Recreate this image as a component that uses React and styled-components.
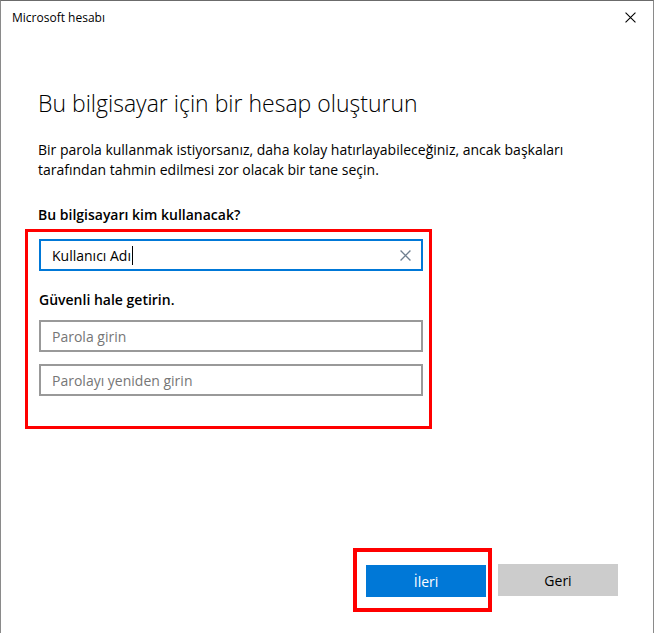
import React from "react";
import styled, { createGlobalStyle } from "styled-components";

const GlobalStyle = createGlobalStyle`
    html, body {
        margin: 0;
        padding: 0;
        background: #ffffff;
    }
    * {
        box-sizing: border-box;
    }
`;

const StyledWindow = styled.div`
    width: 654px;
    height: 633px;
    display: flex;
    flex-direction: column;
    background: #ffffff;
    border-top: 1px solid #6b6b6b;
    border-left: 1px solid #8a8a8a;
    border-right: 1px solid #8a8a8a;
    font-family: "Segoe UI", "Open Sans", "Noto Sans", sans-serif;
    color: #000000;
`;

const StyledTitleBar = styled.div`
    height: 32px;
    display: flex;
    align-items: center;
    justify-content: space-between;
    padding: 0 17px 0 11px;
    font-size: 12px;
`;

const StyledCloseButton = styled.button`
    width: 12px;
    height: 12px;
    padding: 0;
    border: none;
    background: none;
    display: flex;
    align-items: center;
    justify-content: center;
`;

const StyledContent = styled.div`
    flex: 1 1 auto;
    display: flex;
    flex-direction: column;
    padding: 0 0 0 37px;
`;

const StyledHeading = styled.h1`
    margin: 55px 0 0 0;
    font-size: 23px;
    font-weight: 300;
    line-height: 30px;
    color: #000000;
`;

const StyledParagraph = styled.p`
    margin: 22px 0 0 0;
    width: 560px;
    font-size: 14px;
    line-height: 20px;
`;

const StyledLabel = styled.div`
    margin: ${(props) => props.$top || 0}px 0 0 0;
    font-size: 14px;
    font-weight: 600;
    line-height: 20px;
`;

const StyledHighlight = styled.div`
    margin: 4px 0 0 -13px;
    width: 407px;
    padding: 7px 0 30px 11px;
    border: 3px solid #ff0000;
`;

const StyledField = styled.div`
    width: 384px;
    height: 32px;
    display: flex;
    align-items: center;
    padding: 0 10px 0 11px;
    margin-top: ${(props) => props.$top || 0}px;
    border: 2px solid ${(props) => (props.$focused ? "#0078d7" : "#999999")};
    font-size: 14px;
    color: ${(props) => (props.$placeholder ? "#767676" : "#000000")};
`;

const StyledFieldText = styled.span`
    flex: 1 1 auto;
    display: flex;
    align-items: center;
`;

const StyledCaret = styled.span`
    display: inline-block;
    width: 1px;
    height: 19px;
    margin-left: 1px;
    background: #000000;
`;

const StyledButtonRow = styled.div`
    margin-top: auto;
    display: flex;
    align-items: center;
    justify-content: flex-end;
    padding: 0 35px 21px 0;
`;

const StyledButtonFrame = styled.div`
    padding: 13px 2px 11px 9px;
    border: 4px solid #ff0000;
    margin-right: 6px;
`;

const StyledButton = styled.button`
    width: 120px;
    height: 32px;
    border: none;
    padding: 0;
    font-family: inherit;
    font-size: 14px;
    background: ${(props) => (props.$primary ? "#0078d7" : "#cccccc")};
    color: ${(props) => (props.$primary ? "#ffffff" : "#000000")};
`;

const CloseIcon = ({ size, color, width }) => (
    <svg width={size} height={size} viewBox="0 0 10 10">
        <path d="M0.5 0.5 L9.5 9.5 M9.5 0.5 L0.5 9.5" stroke={color} strokeWidth={width} fill="none" />
    </svg>
);

const App = () => {
    return (
        <>
            <GlobalStyle />
            <StyledWindow>
                <StyledTitleBar>
                    <span>Microsoft hesabı</span>
                    <StyledCloseButton>
                        <CloseIcon size={11} color="#000000" width={1} />
                    </StyledCloseButton>
                </StyledTitleBar>
                <StyledContent>
                    <StyledHeading>Bu bilgisayar için bir hesap oluşturun</StyledHeading>
                    <StyledParagraph>
                        Bir parola kullanmak istiyorsanız, daha kolay hatırlayabileceğiniz, ancak başkaları
                        tarafından tahmin edilmesi zor olacak bir tane seçin.
                    </StyledParagraph>
                    <StyledLabel $top={25}>Bu bilgisayarı kim kullanacak?</StyledLabel>
                    <StyledHighlight>
                        <StyledField $focused>
                            <StyledFieldText>
                                Kullanıcı Adı
                                <StyledCaret />
                            </StyledFieldText>
                            <CloseIcon size={11} color="#6f7f8f" width={1.2} />
                        </StyledField>
                        <StyledLabel $top={19}>Güvenli hale getirin.</StyledLabel>
                        <StyledField $placeholder $top={10}>Parola girin</StyledField>
                        <StyledField $placeholder $top={12}>Parolayı yeniden girin</StyledField>
                    </StyledHighlight>
                    <StyledButtonRow>
                        <StyledButtonFrame>
                            <StyledButton $primary>İleri</StyledButton>
                        </StyledButtonFrame>
                        <StyledButton>Geri</StyledButton>
                    </StyledButtonRow>
                </StyledContent>
            </StyledWindow>
        </>
    );
};

export default App;
